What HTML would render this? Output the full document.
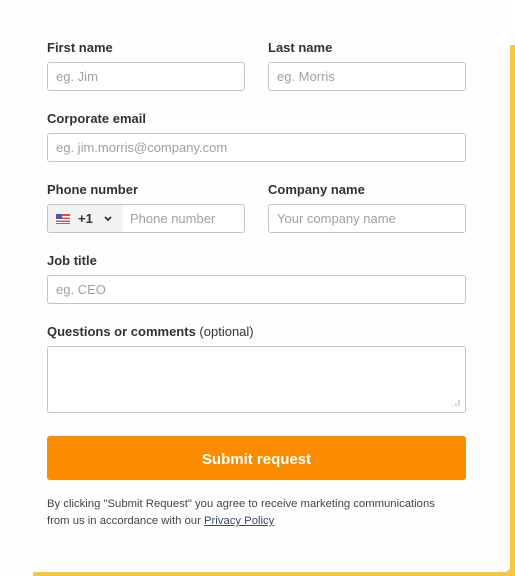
<!DOCTYPE html>
<html><head><style>
*{box-sizing:border-box;margin:0;padding:0}
body{width:515px;height:576px;background:#f5c842;position:relative;overflow:hidden;font-family:"Liberation Sans",sans-serif}
.bgw{position:absolute;left:0;top:0;width:515px;height:45px;background:#fff}
.bgw2{position:absolute;left:0;top:0;width:33px;height:576px;background:#fff}
.card{position:absolute;left:0;top:0;width:510px;height:572px;background:#fefefe;border-radius:0 0 6px 0}
.lab{position:absolute;font-size:13px;font-weight:bold;color:#333}
.lab span{font-weight:normal}
.in{position:absolute;height:29px;border:1px solid #c4c4c4;border-radius:3px;background:#fff;font-size:13px;color:#a0a0a0;padding-left:8px;line-height:28px}
.btn{position:absolute;left:47px;top:436px;width:419px;height:44px;background:#fb8c00;border-radius:3px;color:#fff;font-size:15px;font-weight:bold;text-align:center;line-height:47px}
.note{position:absolute;left:47px;top:496px;font-size:11.3px;color:#444;line-height:17px;width:405px}
.note u{color:#3a4a66}
</style></head><body>
<div class="bgw"></div><div class="bgw2"></div>
<div class="card">
<div class="lab" style="left:47px;top:40px">First name</div>
<div class="lab" style="left:268px;top:40px">Last name</div>
<div class="in" style="left:47px;top:62px;width:198px">eg. Jim</div>
<div class="in" style="left:268px;top:62px;width:198px">eg. Morris</div>
<div class="lab" style="left:47px;top:111px">Corporate email</div>
<div class="in" style="left:47px;top:133px;width:419px">eg. jim.morris@company.com</div>
<div class="lab" style="left:47px;top:182px">Phone number</div>
<div class="lab" style="left:268px;top:182px">Company name</div>
<div class="in" style="left:47px;top:204px;width:198px;padding-left:0;overflow:hidden">
 <div style="position:absolute;left:0;top:0;width:75px;height:27px;background:#f2f2f2"></div>
 <svg style="position:absolute;left:8px;top:9px" width="14" height="10"><rect width="14" height="10" fill="#e04c4c"/><rect y="2" width="14" height="1.5" fill="#fff"/><rect y="5" width="14" height="1.5" fill="#fff"/><rect y="8" width="14" height="1" fill="#fff"/><rect width="6" height="5" fill="#4a5aa8"/></svg>
 <span style="position:absolute;left:30px;color:#333;font-weight:bold;font-size:13px">+1</span>
 <svg style="position:absolute;left:56px;top:11px" width="8" height="6"><path d="M1 1l3 3 3-3" stroke="#333" stroke-width="1.8" fill="none"/></svg>
 <span style="position:absolute;left:82px">Phone number</span>
</div>
<div class="in" style="left:268px;top:204px;width:198px">Your company name</div>
<div class="lab" style="left:47px;top:253px">Job title</div>
<div class="in" style="left:47px;top:275px;width:419px">eg. CEO</div>
<div class="lab" style="left:47px;top:324px">Questions or comments <span>(optional)</span></div>
<div class="in" style="left:47px;top:346px;width:419px;height:67px">
<svg style="position:absolute;right:5px;bottom:5px" width="8" height="8"><path d="M7 1v6M4 4v3M1 7v0.5" stroke="#bbb" stroke-width="1.2"/></svg></div>
<div class="btn">Submit request</div>
<div class="note">By clicking "Submit Request" you agree to receive marketing communications from us in accordance with our <u>Privacy Policy</u></div>
</div>
</body></html>
